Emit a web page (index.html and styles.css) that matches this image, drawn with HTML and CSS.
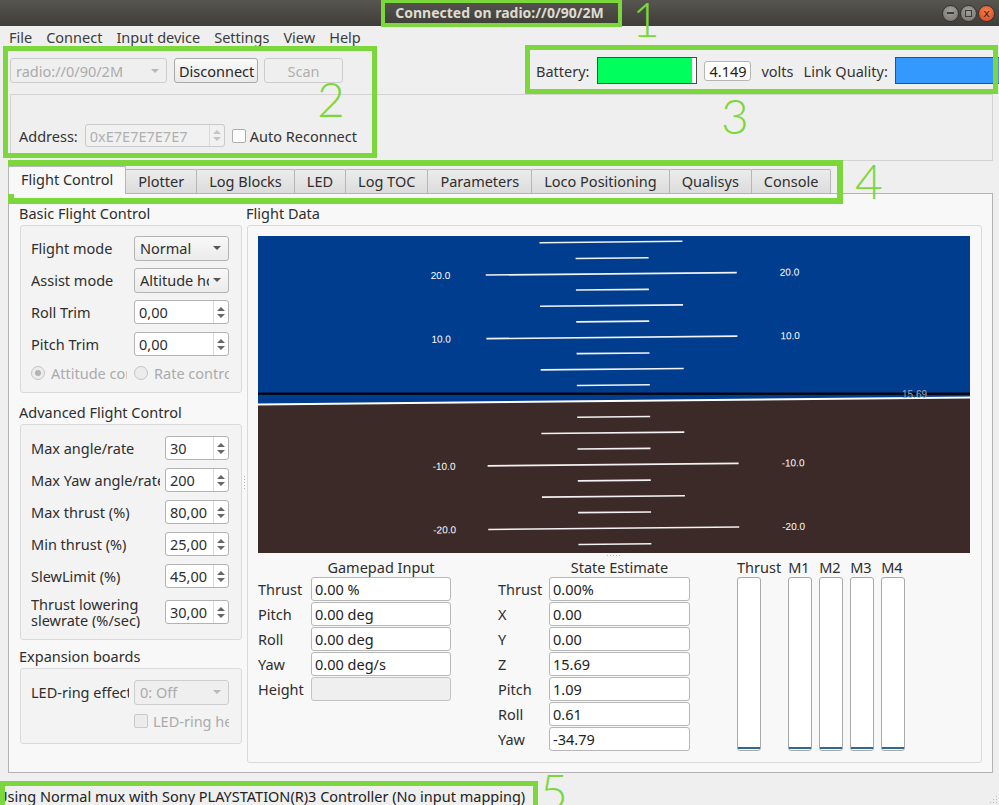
FILE: index.html
```html
<!DOCTYPE html>
<html lang="en">
<head>
<meta charset="utf-8">
<title>Crazyflie client</title>
<link rel="stylesheet" href="styles.css">
</head>
<body>
<div class="window">
  <header class="titlebar">
    <div></div>
    <div class="title">Connected on radio://0/90/2M</div>
    <div class="wbtns">
      <span class="wb wb-min"><span class="dash"></span></span>
      <span class="wb wb-max"><span class="sq"></span></span>
      <span class="wb wb-close">x</span>
    </div>
  </header>

  <nav class="menubar">
    <span class="mi">File</span><span class="mi">Connect</span><span class="mi">Input device</span><span class="mi">Settings</span><span class="mi">View</span><span class="mi">Help</span>
  </nav>

  <section class="toolbar">
    <div class="conn-row">
      <div class="conn-left">
        <div class="combo combo-uri disabled"><span class="cv">radio://0/90/2M</span><i class="caret"></i></div>
        <button class="btn btn-disc">Disconnect</button>
        <button class="btn btn-scan" disabled>Scan</button>
      </div>
      <div class="link-status">
        <span>Battery:</span>
        <div class="meter meter-batt"><div class="meter-fill" style="width:95%"></div></div>
        <span class="volt-box">4.149</span>
        <span class="volts">volts</span>
        <span class="link-label">Link Quality:</span>
        <div class="meter meter-link"></div>
      </div>
    </div>
    <div class="addr-frame">
      <div class="addr-row">
        <span>Address:</span>
        <div class="spin spin-addr disabled"><span class="spin-val">0xE7E7E7E7E7</span><span class="spin-arrows"><i class="up"></i><i class="down"></i></span></div>
        <label class="check"><span class="box"></span><span>Auto Reconnect</span></label>
      </div>
    </div>
  </section>

  <section class="tabwidget">
    <div class="tabbar">
      <span class="tab active">Flight Control</span>
      <span class="tab">Plotter</span>
      <span class="tab">Log Blocks</span>
      <span class="tab">LED</span>
      <span class="tab">Log TOC</span>
      <span class="tab">Parameters</span>
      <span class="tab">Loco Positioning</span>
      <span class="tab">Qualisys</span>
      <span class="tab">Console</span>
    </div>
    <div class="pane">
      <div class="left-col">
        <div class="gb-title">Basic Flight Control</div>
        <div class="gbox gform basic">
          <span class="lbl">Flight mode</span>
          <div class="combo"><span class="cv">Normal</span><i class="caret"></i></div>
          <span class="lbl">Assist mode</span>
          <div class="combo"><span class="cv">Altitude hold</span><i class="caret"></i></div>
          <span class="lbl">Roll Trim</span>
          <div class="spin"><span class="spin-val">0,00</span><span class="spin-arrows"><i class="up"></i><i class="down"></i></span></div>
          <span class="lbl">Pitch Trim</span>
          <div class="spin"><span class="spin-val">0,00</span><span class="spin-arrows"><i class="up"></i><i class="down"></i></span></div>
          <div class="radios">
            <span class="radio checked"><i></i><span class="rt">Attitude control</span></span>
            <span class="radio"><i></i><span class="rt">Rate control</span></span>
          </div>
        </div>

        <div class="gb-title gt-adv">Advanced Flight Control</div>
        <div class="gbox gform adv">
          <span class="lbl">Max angle/rate</span>
          <div class="spin"><span class="spin-val">30</span><span class="spin-arrows"><i class="up"></i><i class="down"></i></span></div>
          <span class="lbl">Max Yaw angle/rate</span>
          <div class="spin"><span class="spin-val">200</span><span class="spin-arrows"><i class="up"></i><i class="down"></i></span></div>
          <span class="lbl">Max thrust (%)</span>
          <div class="spin"><span class="spin-val">80,00</span><span class="spin-arrows"><i class="up"></i><i class="down"></i></span></div>
          <span class="lbl">Min thrust (%)</span>
          <div class="spin"><span class="spin-val">25,00</span><span class="spin-arrows"><i class="up"></i><i class="down"></i></span></div>
          <span class="lbl">SlewLimit (%)</span>
          <div class="spin"><span class="spin-val">45,00</span><span class="spin-arrows"><i class="up"></i><i class="down"></i></span></div>
          <span class="lbl two">Thrust lowering<br>slewrate (%/sec)</span>
          <div class="spin"><span class="spin-val">30,00</span><span class="spin-arrows"><i class="up"></i><i class="down"></i></span></div>
        </div>

        <div class="gb-title gt-exp">Expansion boards</div>
        <div class="gbox gform exp">
          <span class="lbl">LED-ring effect</span>
          <div class="combo disabled"><span class="cv">0: Off</span><i class="caret"></i></div>
          <span></span>
          <label class="check disabled"><span class="box"></span><span class="ct">LED-ring headlight</span></label>
        </div>
      </div>

      <div class="split-v"><i></i></div>

      <div class="right-col">
        <div class="gb-title">Flight Data</div>
        <div class="gbox data">
          <svg class="horizon" width="712" height="317" viewBox="0 0 712 317">
            <rect width="712" height="317" fill="#003d8f"/>
            <g transform="rotate(-0.563 355 165)">
              <rect x="-40" y="165" width="800" height="220" fill="#3c2a28"/>
              <line x1="-40" y1="165" x2="760" y2="165" stroke="#fff" stroke-width="2"/>
              <g stroke="#f2f2f2" stroke-width="1.6">
                <line x1="283" y1="6" x2="426" y2="6"/>
                <line x1="319" y1="22.1" x2="392" y2="22.1"/>
                <line x1="229" y1="37.8" x2="480" y2="37.8"/>
                <line x1="319" y1="53.7" x2="392" y2="53.7"/>
                <line x1="283" y1="69.6" x2="426" y2="69.6"/>
                <line x1="319" y1="85.5" x2="392" y2="85.5"/>
                <line x1="229" y1="101.4" x2="480" y2="101.4"/>
                <line x1="319" y1="117.3" x2="392" y2="117.3"/>
                <line x1="283" y1="133.2" x2="426" y2="133.2"/>
                <line x1="319" y1="149.1" x2="392" y2="149.1"/>
                <line x1="319" y1="180.9" x2="392" y2="180.9"/>
                <line x1="283" y1="196.8" x2="426" y2="196.8"/>
                <line x1="319" y1="212.7" x2="392" y2="212.7"/>
                <line x1="229" y1="228.6" x2="480" y2="228.6"/>
                <line x1="319" y1="244.5" x2="392" y2="244.5"/>
                <line x1="283" y1="260.4" x2="426" y2="260.4"/>
                <line x1="319" y1="276.3" x2="392" y2="276.3"/>
                <line x1="229" y1="292.2" x2="480" y2="292.2"/>
                <line x1="319" y1="308.1" x2="392" y2="308.1"/>
              </g>
              <g class="ladder-txt" fill="#fff">
                <text x="174" y="41.3">20.0</text>
                <text x="523" y="41.3">20.0</text>
                <text x="174" y="104.9">10.0</text>
                <text x="523" y="104.9">10.0</text>
                <text x="174" y="232.1">-10.0</text>
                <text x="523" y="232.1">-10.0</text>
                <text x="174" y="295.7">-20.0</text>
                <text x="523" y="295.7">-20.0</text>
              </g>
            </g>
            <rect x="0" y="156.6" width="712" height="2.2" fill="#000"/>
            <text class="alt-txt" x="644" y="162">15.69</text>
          </svg>
          <div class="split-h"><i></i></div>
          <div class="readouts">
            <div class="rgrid gamepad">
              <span class="rhead">Gamepad Input</span>
              <span class="rl">Thrust</span><span class="field">0.00 %</span>
              <span class="rl">Pitch</span><span class="field">0.00 deg</span>
              <span class="rl">Roll</span><span class="field">0.00 deg</span>
              <span class="rl">Yaw</span><span class="field">0.00 deg/s</span>
              <span class="rl">Height</span><span class="field disabled"></span>
            </div>
            <div class="rgrid state">
              <span class="rhead">State Estimate</span>
              <span class="rl">Thrust</span><span class="field">0.00%</span>
              <span class="rl">X</span><span class="field">0.00</span>
              <span class="rl">Y</span><span class="field">0.00</span>
              <span class="rl">Z</span><span class="field">15.69</span>
              <span class="rl">Pitch</span><span class="field">1.09</span>
              <span class="rl">Roll</span><span class="field">0.61</span>
              <span class="rl">Yaw</span><span class="field">-34.79</span>
            </div>
            <div class="thrusts">
              <div class="tcol"><span class="tl">Thrust</span><div class="tbar"><i></i></div></div>
              <div class="tcol"><span class="tl">M1</span><div class="tbar"><i></i></div></div>
              <div class="tcol"><span class="tl">M2</span><div class="tbar"><i></i></div></div>
              <div class="tcol"><span class="tl">M3</span><div class="tbar"><i></i></div></div>
              <div class="tcol"><span class="tl">M4</span><div class="tbar"><i></i></div></div>
            </div>
          </div>
        </div>
      </div>
    </div>
  </section>

  <footer class="statusbar">
    <span class="status-text">Using Normal mux with Sony PLAYSTATION(R)3 Controller (No input mapping)</span>
    <svg class="grip" width="8" height="8" viewBox="0 0 8 8"><g fill="#b9b9b9"><rect x="6" y="0" width="1" height="1"/><rect x="3" y="3" width="1" height="1"/><rect x="6" y="3" width="1" height="1"/><rect x="0" y="6" width="1" height="1"/><rect x="3" y="6" width="1" height="1"/><rect x="6" y="6" width="1" height="1"/></g></svg>
  </footer>

  <div class="annot a1"></div>
  <div class="annot a2"></div>
  <div class="annot a3"></div>
  <div class="annot a4"></div>
  <div class="annot a5"></div>
  <span class="num n1">1</span>
  <span class="num n2">2</span>
  <span class="num n3">3</span>
  <span class="num n4">4</span>
  <span class="num n5">5</span>
</div>
</body>
</html>
```

FILE: styles.css
```css
*{box-sizing:border-box;margin:0;padding:0}
html,body{width:999px;height:805px;overflow:hidden}
body{background:#efefef;font-family:"Noto Sans","Open Sans",sans-serif;font-size:14.5px;color:#343434;line-height:20px}
.window{position:relative;width:999px;height:805px;display:flex;flex-direction:column;overflow:hidden}

/* title bar */
.titlebar{flex:0 0 26px;display:grid;grid-template-columns:1fr auto 1fr;align-items:center;background:linear-gradient(#57554f,#3e3d39)}
.title{font-weight:700;font-size:14px;color:#dfdbd2;white-space:nowrap;margin-top:-1px}
.wbtns{justify-self:end;display:flex;gap:1px;padding-right:4px}
.wb{width:17px;height:17px;border-radius:50%;display:flex;align-items:center;justify-content:center;background:radial-gradient(circle at 50% 35%,#a3a19c,#72716c);border:1px solid #34332f}
.wb-close{background:radial-gradient(circle at 50% 35%,#f47d4d,#d9481c);color:#43200f;font-size:11px;line-height:1;font-family:"DejaVu Sans",sans-serif}
.dash{width:7px;height:2px;background:#3c3b37}
.sq{width:7px;height:7px;border:1.5px solid #3c3b37}

/* menu */
.menubar{flex:0 0 21px;display:flex;align-items:center;padding-left:2px}
.mi{padding:0 7px;color:#3c3c3c}

/* toolbar */
.toolbar{flex:0 0 114px;display:flex;flex-direction:column}
.conn-row{display:flex;align-items:center;padding:11px 0 0 10px;height:36px}
.conn-left{display:flex;align-items:center;gap:7px;flex:none}
.combo{display:flex;align-items:center;gap:4px;height:25px;padding:0 7px 0 5px;border:1px solid #b3b3b3;border-radius:3px;background:linear-gradient(#f8f8f8,#ebebeb);white-space:nowrap;overflow:hidden;color:#2e2e2e}
.cv{flex:1;min-width:0;overflow:hidden;white-space:nowrap}
.combo-uri{width:157px}
.combo.disabled{color:#ababab;border-color:#cdcdcd;background:#efefef}
.caret{flex:none;width:0;height:0;border-left:4px solid transparent;border-right:4px solid transparent;border-top:4px solid #555}
.combo.disabled .caret{border-top-color:#b8b8b8}
.btn{font:inherit;height:25px;padding:0 4px;border:1px solid #a9a9a9;border-radius:3px;background:linear-gradient(#fafafa,#e9e9e9);color:#262626}
.btn-disc{width:84px}
.btn-scan{width:79px;margin-left:-1px;color:#b0b0b0;border-color:#cdcdcd;background:#efefef}

.link-status{display:flex;align-items:center;margin-left:193px;flex:none}
.meter{height:27px;border:1px solid #4a4a4a;background:#fff;flex:none}
.meter-batt{width:100px;margin-left:8px}
.meter-fill{height:100%;background:#00ff5c}
.volt-box{margin-left:7px;width:47px;height:20px;border:1px solid #b5b5b5;border-radius:3px;background:#fff;text-align:center;line-height:18px;color:#222}
.volts{margin-left:10px}
.link-label{margin-left:10px}
.meter-link{width:115px;margin-left:7px;background:#3399ff}

.addr-frame{margin:11px 0 0 10px;width:983px;height:67px;border:1px solid #d3d3d3;padding:29px 0 0 8px}
.addr-row{display:flex;align-items:center;height:23px}
.spin{display:flex;height:24px;border:1px solid #b3b3b3;border-radius:3px;background:#fff;overflow:hidden;color:#2e2e2e}
.spin-val{flex:1;min-width:0;padding-left:4px;line-height:22px;white-space:nowrap;overflow:hidden}
.spin-arrows{flex:0 0 15px;display:flex;flex-direction:column;justify-content:center;align-items:center;gap:3px;border-left:1px solid #dadada}
.spin-arrows .up{width:0;height:0;border-left:4px solid transparent;border-right:4px solid transparent;border-bottom:4px solid #666}
.spin-arrows .down{width:0;height:0;border-left:4px solid transparent;border-right:4px solid transparent;border-top:4px solid #666}
.spin.disabled{background:#f1f1f1;color:#b0b0b0;border-color:#c9c9c9}
.spin.disabled .up{border-bottom-color:#c4c4c4}
.spin.disabled .down{border-top-color:#c4c4c4}
.spin-addr{width:140px;height:23px;margin-left:7px}
.check{display:flex;align-items:center;gap:4px;margin-left:7px;white-space:nowrap}
.check .box{flex:none;width:14px;height:14px;border:1px solid #adadad;border-radius:2px;background:#fff}

/* tabs */
.tabwidget{flex:0 0 612px;display:flex;flex-direction:column;margin:0 6px 0 8px}
.tabbar{height:32px;display:flex;align-items:flex-end;position:relative;z-index:1}
.tab{height:24px;padding:0 12px;border:1px solid #b6b6b6;border-bottom:none;margin-left:-1px;background:linear-gradient(#ececec,#dcdcdc);border-radius:2px 2px 0 0;line-height:22px;white-space:nowrap;color:#2e2e2e}
.tab.active{height:28px;margin-bottom:-1px;margin-left:0;background:#f8f8f8;line-height:25px}
.pane{flex:1;min-height:0;border:1px solid #b3b3b3;background:#f8f8f8;display:flex;padding:9px 10px}

.left-col{flex:0 0 223px;display:flex;flex-direction:column}
.gb-title{height:20px;line-height:20px;margin-bottom:2px;white-space:nowrap;color:#2e2e2e}
.gt-adv{margin-top:9px}
.gt-exp{margin-top:6px}
.gbox{border:1px solid #dadada;border-radius:3px;background:#f3f3f3;margin-left:1px}
.gform{display:grid;align-items:center;row-gap:8px;column-gap:5px;padding:10px 12px 10px 10px}
.basic{grid-template-columns:98px 95px;grid-template-rows:repeat(4,24px) 18px}
.adv{grid-template-columns:129px 64px;grid-template-rows:repeat(5,24px) 32px;padding:11px 12px 11px 10px}
.exp{grid-template-columns:98px 95px;grid-template-rows:24px 20px;row-gap:7px;padding:11px 12px 12px 10px}
.lbl{white-space:nowrap;overflow:hidden;color:#2e2e2e}
.lbl.two{line-height:16px}
.radios{grid-column:1 / span 2;display:grid;grid-template-columns:103px 95px;color:#ababab}
.radio{display:flex;align-items:center;gap:6px;overflow:hidden;white-space:nowrap}
.radio i{flex:none;width:14px;height:14px;border-radius:50%;border:1px solid #c4c4c4;background:#ececec;display:flex;align-items:center;justify-content:center}
.radio.checked i::after{content:"";width:6px;height:6px;border-radius:50%;background:#b3b3b3}
.rt{overflow:hidden}
.radio:first-child .rt{max-width:76px}
.check.disabled{margin-left:0;gap:5px;color:#ababab;overflow:hidden}
.check.disabled .box{background:#ececec;border-color:#c8c8c8}
.ct{overflow:hidden}

.split-v{flex:0 0 4px;display:flex;align-items:center;justify-content:center}
.split-v i{width:1px;height:14px;background:repeating-linear-gradient(#b8b8b8 0 1px,transparent 1px 3px)}

.right-col{flex:1;min-width:0;display:flex;flex-direction:column}
.data{flex:1;background:#f8f8f8;padding:10px 11px 0 10px;display:flex;flex-direction:column}
.horizon{display:block;flex:none}
.ladder-txt{font-family:"Liberation Sans",sans-serif;font-size:10px}
.alt-txt{font-family:"Liberation Sans",sans-serif;font-size:10px;fill:#9aa6b8}
.split-h{height:5px;display:flex;justify-content:center;align-items:center}
.split-h i{width:14px;height:1px;background:repeating-linear-gradient(90deg,#b8b8b8 0 1px,transparent 1px 3px)}

.readouts{display:flex;gap:47px;align-items:flex-start}
.rgrid{display:grid;row-gap:1px;align-items:center}
.gamepad{grid-template-columns:53px 140px;grid-template-rows:18px repeat(5,24px)}
.state{grid-template-columns:51px 141px;grid-template-rows:18px repeat(7,24px)}
.rhead{grid-column:2;text-align:center;line-height:18px;color:#2e2e2e;white-space:nowrap}
.rl{color:#2e2e2e;white-space:nowrap}
.field{height:24px;border:1px solid #b7b7b7;border-radius:3px;background:#fff;padding-left:3px;line-height:22px;white-space:nowrap;overflow:hidden;color:#222}
.field.disabled{background:#efefef;border-color:#c4c4c4}

.thrusts{display:flex;gap:7px}
.tcol{display:flex;flex-direction:column;gap:1px}
.tl{height:18px;line-height:18px;color:#2e2e2e}
.tbar{width:24px;height:174px;border:1px solid #a9a9a9;border-radius:3px;background:#fff;display:flex;flex-direction:column;justify-content:flex-end;padding-bottom:1px}
.tbar i{height:2px;background:#2c6a9c}

/* status bar */
.statusbar{flex:0 0 32px;display:flex;align-items:flex-start;justify-content:space-between;padding-top:13px}
.status-text{text-indent:-3px;white-space:nowrap;color:#222}
.grip{margin-top:10px;margin-right:1px}

/* annotations */
.annot{position:absolute;border:5px solid #7bd73c;pointer-events:none}
.a1{left:381px;top:-1px;width:241px;height:28px;border-width:4px}
.a2{left:3px;top:46px;width:374px;height:112px}
.a3{left:525px;top:45px;width:473px;height:49px}
.a4{left:8px;top:160px;width:835px;height:44px;border-width:6px}
.a5{left:0;top:781px;width:538px;height:30px}
.num{position:absolute;color:#7bd73c;font-family:Lato,"Noto Sans",sans-serif;font-weight:300;font-size:48px;line-height:48px}
.n1{left:632px;top:-5px}
.n2{left:317px;top:75px}
.n3{left:721px;top:92px}
.n4{left:855px;top:157px}
.n5{left:540px;top:767px}
```
